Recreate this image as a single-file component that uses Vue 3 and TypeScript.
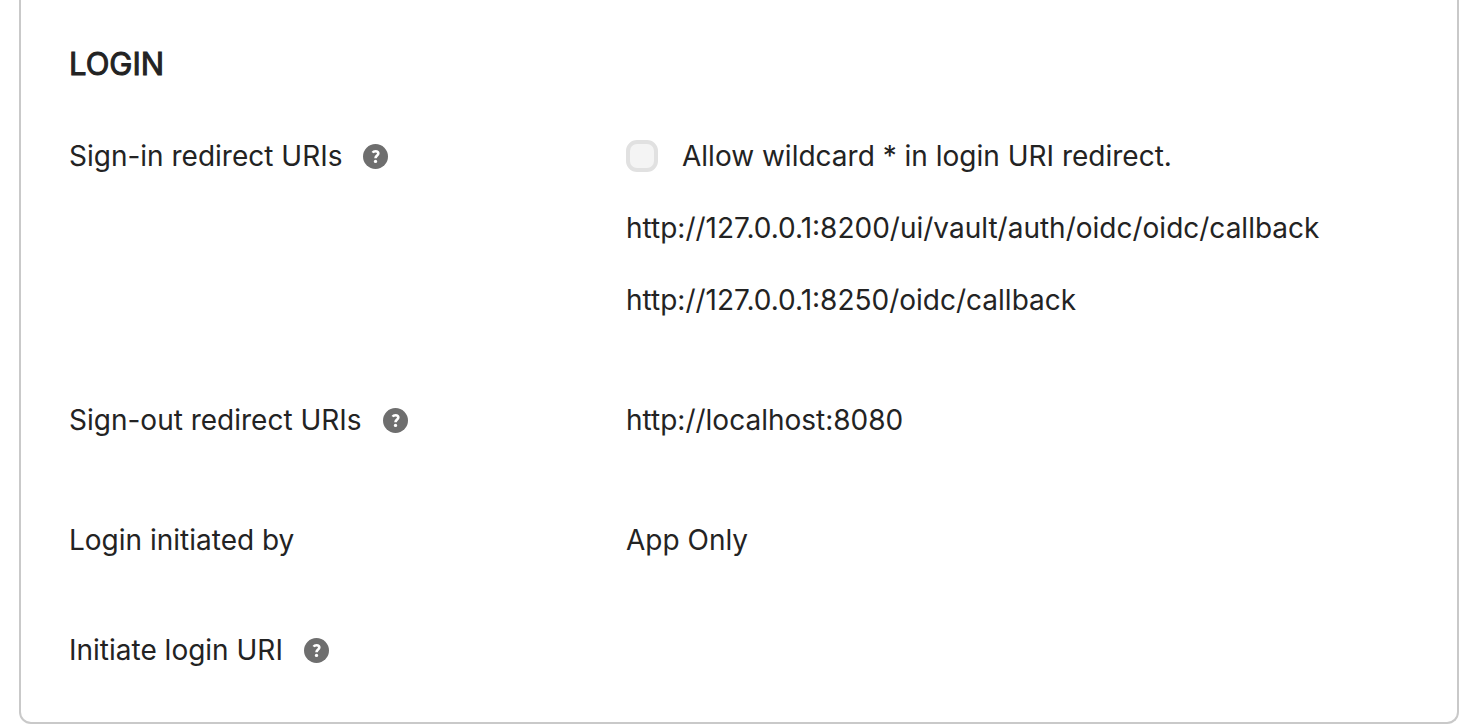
<script setup lang="ts">
interface Row {
  label: string
  help: boolean
  wildcard?: boolean
  values: string[]
}

const rows: Row[] = [
  {
    label: 'Sign-in redirect URIs',
    help: true,
    wildcard: true,
    values: [
      'http://127.0.0.1:8200/ui/vault/auth/oidc/oidc/callback',
      'http://127.0.0.1:8250/oidc/callback',
    ],
  },
  { label: 'Sign-out redirect URIs', help: true, values: ['http://localhost:8080'] },
  { label: 'Login initiated by', help: false, values: ['App Only'] },
  { label: 'Initiate login URI', help: true, values: [] },
]
</script>

<template>
  <main class="page">
    <section class="card">
      <h2 class="title">LOGIN</h2>
      <dl class="rows">
        <div v-for="row in rows" :key="row.label" class="row">
          <dt class="label">
            <span>{{ row.label }}</span>
            <button v-if="row.help" type="button" class="help" :aria-label="'Help: ' + row.label">
              <svg viewBox="0 0 24 24" aria-hidden="true">
                <circle cx="12" cy="12" r="12" fill="#6e6e6e" />
                <path
                  d="M9.2 8.3C9.9 7.2 10.9 6.9 12 6.9c1.7 0 2.7.9 2.7 2.2 0 2-2.7 2-2.7 4.6"
                  fill="none"
                  stroke="#fff"
                  stroke-width="2.5"
                />
                <circle cx="12" cy="16.7" r="1.6" fill="#fff" />
              </svg>
            </button>
          </dt>
          <dd class="values">
            <label v-if="row.wildcard" class="check">
              <input type="checkbox" disabled />
              <span>Allow wildcard * in login URI redirect.</span>
            </label>
            <span v-for="value in row.values" :key="value">{{ value }}</span>
          </dd>
        </div>
      </dl>
    </section>
  </main>
</template>

<style>
body {
  background: #fff;
}
</style>

<style scoped>
.page {
  padding: 0 11px 2px 19px;
  font-family: Inter, 'Liberation Sans', sans-serif;
  font-size: 28px;
  line-height: 40px;
  color: #232323;
}
.card {
  border: 2px solid #c9c9c9;
  border-top: 0;
  border-radius: 0 0 12px 12px;
  padding: 44px 48px 52px;
}
.title {
  margin: 0 0 52px;
  font-size: 31px;
  line-height: 40px;
  font-weight: 400;
  -webkit-text-stroke: 1px currentColor;
}
.rows {
  margin: 0;
  display: flex;
  flex-direction: column;
  gap: 80px;
}
.row {
  display: grid;
  grid-template-columns: 557px 1fr;
}
.row:last-child {
  margin-top: -10px;
}
.label {
  display: flex;
  align-items: center;
  align-self: start;
  gap: 21px;
}
.help {
  width: 25px;
  height: 25px;
  padding: 0;
  border: 0;
  background: none;
}
.help svg {
  display: block;
}
.values {
  margin: 0;
  display: flex;
  flex-direction: column;
  gap: 32px;
}
.check {
  display: flex;
  align-items: center;
  gap: 24px;
}
.check input {
  appearance: none;
  width: 32px;
  height: 32px;
  margin: 0;
  border: 4px solid #e1e1e1;
  border-radius: 11px;
  background: #f4f4f4;
}
</style>
